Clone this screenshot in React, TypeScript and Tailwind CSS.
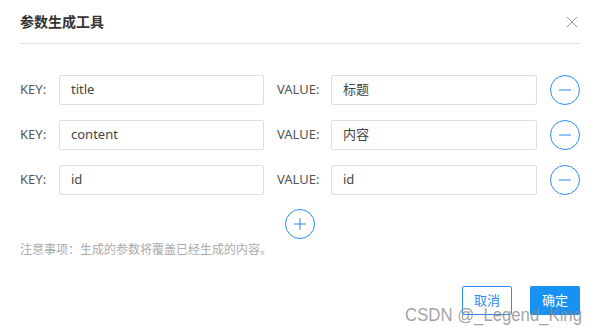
const rows = [
  { key: 'title', value: '标题' },
  { key: 'content', value: '内容' },
  { key: 'id', value: 'id' },
]

const FONT = "font-['Noto_Sans','Noto_Sans_CJK_SC',sans-serif]"

function CircleButton({ plus }: { plus?: boolean }) {
  return (
    <button
      type="button"
      className="flex h-[30px] w-[30px] shrink-0 items-center justify-center rounded-full border border-[#2d8cf0] bg-white"
    >
      <svg width="14" height="14" viewBox="0 0 14 14" fill="none" stroke="#2d8cf0" strokeWidth="1">
        <path d="M1 7h12" />
        {plus && <path d="M7 1v12" />}
      </svg>
    </button>
  )
}

export default function App() {
  return (
    <div className={`relative h-[334px] w-[597px] overflow-hidden bg-white ${FONT}`}>
      <div className="ml-5 w-[560px]">
        <header className="flex h-[44px] items-center justify-between border-b border-[#e1e1e1]">
          <h1 className="text-[14px] font-bold text-[#333]">参数生成工具</h1>
          <svg width="12" height="12" viewBox="0 0 12 12" stroke="#999" strokeWidth="1" className="mr-[2px]">
            <path d="M1 1l10 10M11 1L1 11" />
          </svg>
        </header>

        <div className="pt-[31px]">
          <div className="flex flex-col gap-[15px]">
            {rows.map((row) => (
              <div key={row.key} className="flex items-center text-[13px] text-[#555]">
                <span className="w-[39px] shrink-0">KEY:</span>
                <div className="flex h-[30px] w-[205px] shrink-0 items-center rounded-[2px] border border-[#dcdee2] px-[11px] text-[#444]">
                  {row.key}
                </div>
                <span className="ml-[13px] w-[54px] shrink-0">VALUE:</span>
                <div className="flex h-[30px] w-[206px] shrink-0 items-center rounded-[2px] border border-[#dcdee2] px-[11px] text-[#444]">
                  {row.value}
                </div>
                <div className="ml-[13px]">
                  <CircleButton />
                </div>
              </div>
            ))}
          </div>

          <div className="mt-[14px] flex justify-center">
            <CircleButton plus />
          </div>

          <p className="mt-[2px] text-[12px] text-[#aaa]">注意事项：生成的参数将覆盖已经生成的内容。</p>

          <div className="mt-[27px] flex justify-end gap-[18px]">
            <button
              type="button"
              className="h-[29px] w-[50px] rounded-[2px] border border-[#2d8cf0] bg-white text-[13px] text-[#2d8cf0]"
            >
              取消
            </button>
            <button type="button" className="h-[29px] w-[50px] rounded-[2px] bg-[#1791f2] text-[13px] text-white">
              确定
            </button>
          </div>
        </div>
      </div>

      <span className="pointer-events-none absolute bottom-[10px] right-[15px] origin-right scale-x-[0.88] font-['Liberation_Sans',sans-serif] text-[19px] leading-none text-[#8a8a8a]/80">
        CSDN @_Legend_King
      </span>
    </div>
  )
}
